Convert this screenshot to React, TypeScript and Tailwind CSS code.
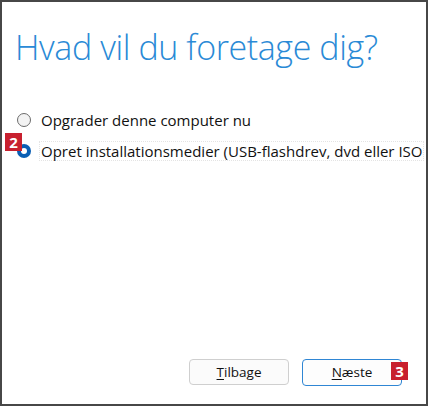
import React from 'react';

function Badge({ n }: { n: string }) {
  return (
    <span className="flex h-[18px] w-[17px] items-center justify-center bg-[#c8202f] text-[15px] font-bold leading-none text-white">
      {n}
    </span>
  );
}

export default function App() {
  return (
    <div
      className="relative flex h-[406px] w-[428px] flex-col border-2 border-[#474747] bg-white"
      style={{ fontFamily: '"Open Sans", "Noto Sans", sans-serif' }}
    >
      <h1 className="ml-[13px] mt-[21px] whitespace-nowrap text-[34px] font-light leading-[48px] tracking-[-0.4px] text-[#2a8ad6]">
        Hvad vil du foretage dig?
      </h1>

      <div className="mt-[39px] flex flex-col gap-[11px] overflow-hidden text-[15px] text-[#111]">
        <label className="flex items-center whitespace-nowrap pl-[15px]">
          <span className="h-[14px] w-[14px] shrink-0 rounded-full border border-[#6b6b6b] bg-[#f3f3f3]" />
          <span className="ml-[8px] border border-transparent px-[1px] leading-[18px]">Opgrader denne computer nu</span>
        </label>
        <label className="relative flex items-center whitespace-nowrap pl-[15px]">
          <span className="flex h-[14px] w-[14px] shrink-0 items-center justify-center rounded-full bg-[#0a5fb4]">
            <span className="h-[6px] w-[6px] rounded-full bg-white" />
          </span>
          <span className="ml-[8px] border border-dotted border-[#e4e4e4] px-[1px] leading-[18px]">
            Opret installationsmedier (USB-flashdrev, dvd eller ISO
          </span>
          <span className="absolute left-[3px] top-[-8px]">
            <Badge n="2" />
          </span>
        </label>
      </div>

      <div className="mt-auto mb-[18px] flex justify-end gap-[13px] pr-[24px] text-[13.5px] text-[#111]">
        <button className="h-[26px] w-[100px] rounded-[4px] border border-[#cfcfcf] bg-[#fbfbfb]">
          <span className="underline underline-offset-2">T</span>ilbage
        </button>
        <div className="relative">
          <button className="h-[27px] w-[100px] rounded-[4px] border border-[#2f86d4] bg-[#fdfdfd]">
            <span className="underline underline-offset-2">N</span>æste
          </button>
          <span className="absolute right-[-6px] top-[3px]">
            <Badge n="3" />
          </span>
        </div>
      </div>
    </div>
  );
}
